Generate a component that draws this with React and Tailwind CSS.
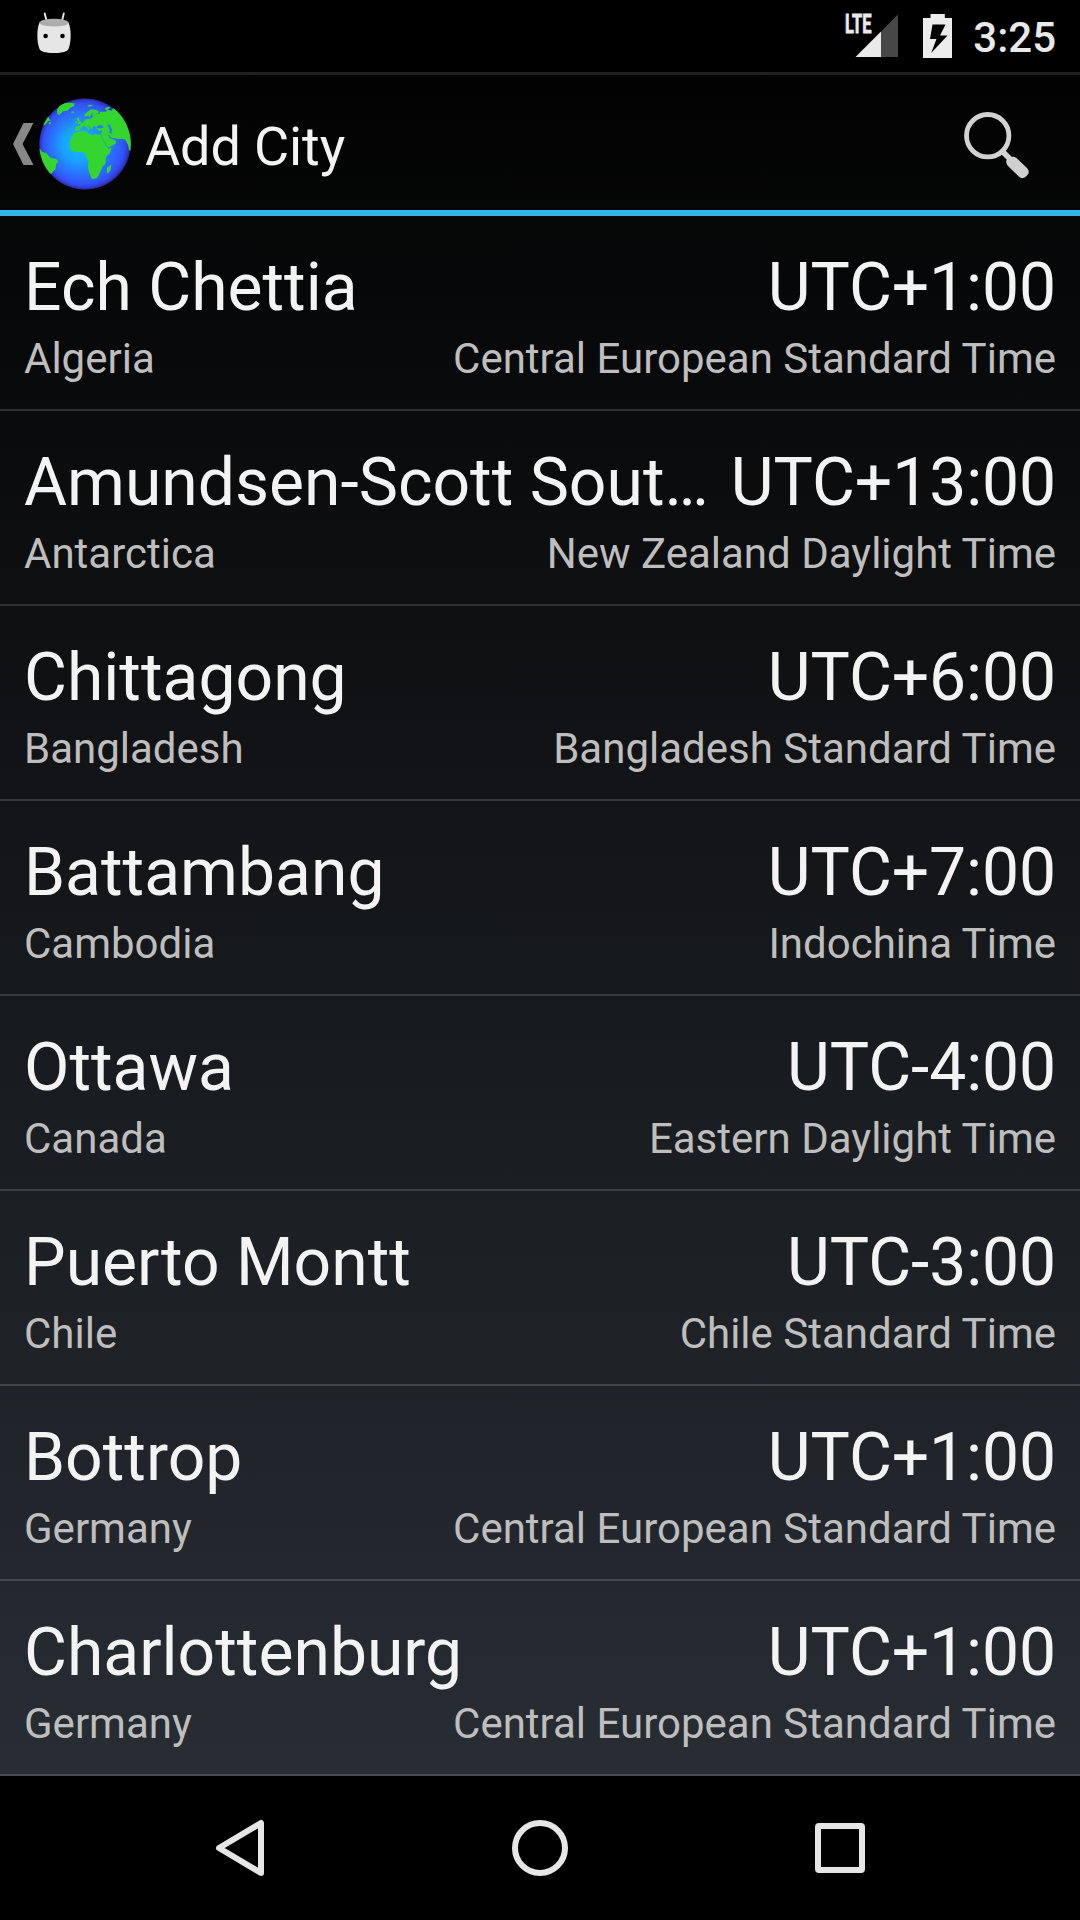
const cities = [
  ["Ech Chettia", "UTC+1:00", "Algeria", "Central European Standard Time"],
  ["Amundsen-Scott Sout…", "UTC+13:00", "Antarctica", "New Zealand Daylight Time"],
  ["Chittagong", "UTC+6:00", "Bangladesh", "Bangladesh Standard Time"],
  ["Battambang", "UTC+7:00", "Cambodia", "Indochina Time"],
  ["Ottawa", "UTC-4:00", "Canada", "Eastern Daylight Time"],
  ["Puerto Montt", "UTC-3:00", "Chile", "Chile Standard Time"],
  ["Bottrop", "UTC+1:00", "Germany", "Central European Standard Time"],
  ["Charlottenburg", "UTC+1:00", "Germany", "Central European Standard Time"],
];

function MarshmallowIcon() {
  return (
    <svg width="36" height="42" viewBox="0 0 36 42" className="block">
      <path d="M8.7 1.5 L10.7 9 M27.8 1.5 L26 9" stroke="#e6e6e6" strokeWidth="1.9" strokeLinecap="round" />
      <path d="M3.5 10.5 C0.6 17 0.6 30 3.5 37 C4.5 39.4 9 41 18 41 C27 41 31.5 39.4 32.5 37 C35.400 30 35.400 17 32.5 10.5 Z" fill="#e6e6e6" />
      <ellipse cx="18" cy="10.7" rx="14.6" ry="3.9" fill="#adadad" />
      <circle cx="9.6" cy="24" r="2.3" fill="#000" />
      <circle cx="26.5" cy="24" r="2.3" fill="#000" />
    </svg>
  );
}

function SignalIcon() {
  return (
    <svg width="56" height="58" viewBox="-2 -12 56 58" className="block">
      <path d="M53 1.5 V44 H36 V18.5 Z" fill="#474747" />
      <path d="M36 18.5 V44 H10.5 Z" fill="#e9e9e9" />
      <text x="0" y="20.2" fontFamily="Roboto, sans-serif" fontWeight="700" fontSize="25" textLength="26.500" lengthAdjust="spacingAndGlyphs" fill="#e9e9e9" stroke="#e9e9e9" strokeWidth="0.8">LTE</text>
    </svg>
  );
}

function BatteryIcon() {
  return (
    <svg width="29" height="44" viewBox="0 0 29 44" className="block">
      <path fillRule="evenodd" d="M7.5 0 H21.8 V4 H29 V44 H0 V4 H7.5 Z M9.5 10.5 L7 25 H13.5 L8.2 39 L24.5 21.5 H17 L22.5 10.5 Z" fill="#ececec" />
    </svg>
  );
}

function Globe() {
  return (
    <svg width="92" height="92" viewBox="117 294 276 276" className="block">
      <defs>
        <radialGradient id="sea" gradientUnits="userSpaceOnUse" cx="255" cy="432" r="138" fx="225" fy="436">
          <stop offset="0" stopColor="#10b8ff" />
          <stop offset="0.34" stopColor="#17a4ff" />
          <stop offset="0.68" stopColor="#2a70ff" />
          <stop offset="0.88" stopColor="#3152fa" />
          <stop offset="0.96" stopColor="#3038c4" />
          <stop offset="1" stopColor="#1c1b70" />
        </radialGradient>
        <clipPath id="disc"><circle cx="255" cy="432" r="137.500" /></clipPath>
      </defs>
      <g clipPath="url(#disc)">
        <circle cx="255" cy="432" r="138" fill="url(#sea)" />
        <g fill="#33d52e">
          <path d="M172 342 L171 329 L177 321 L182 311 L203 308 L224 310 L222 319 L210 324 L203 332 L190 334 L178 345 Z" />
          <path d="M213 337 L219 334 L224 337 L218 340 Z" />
          <path d="M261 317 L270 314 L278 315 L274 319 L266 320 Z" />
          <path d="M314 326 L322 320 L331 321 L329 325 L320 331 Z" />
          <path d="M128 365 L143 346 L148 356 L152 363 L146 362 L140 369 L136 374 L126 377 Z M146 368 L153 366 L152 373 L146 373 Z" />
          <path d="M114 445 L121 448 L127 456 L139 459 L147 469 L153 474 L169 477 L175 485 L168 493 L167 508 L160 514 L154 522 L140 515 L116 470 Z" />
          <path d="M229 356 L236 350 L237 358 L243 366 L243 371 L231 373 L235 366 Z M227 364 L232 362 L230 369 L225 369 Z" />
          <path d="M226 391 L226 379 L240 378 L241 371 L250 366 L257 358 L267 357 L276 354 L279 349 L276 345 L281 337 L274 343 L270 351 L263 347 L253 350 L254 342 L263 335 L274 328 L289 329 L298 335 L291 342 L298 342 L300 335 L318 335 L323 329 L333 332 L341 324 L370 338 L405 390 L398 455 L387 450 L384 435 L376 419 L366 416 L357 418 L345 415 L334 413 L326 405 L322 402 L329 414 L337 418 L347 421 L348 430 L339 436 L324 443 L315 428 L306 412 L303 402 L307 392 L296 393 L290 387 L289 380 L280 379 L276 389 L269 380 L261 374 L271 386 L267 391 L257 380 L251 378 L243 383 L239 391 L231 394 Z" />
          <path d="M222 399 L247 393 L261 394 L265 402 L280 406 L285 401 L302 405 L312 427 L323 445 L335 444 L330 458 L318 472 L316 491 L307 501 L301 515 L292 534 L277 538 L269 523 L264 503 L265 483 L257 468 L255 459 L244 456 L226 457 L216 453 L209 441 L210 423 L216 410 Z" />
          <path d="M329 497 L334 493 L332 509 L326 519 L320 518 L321 503 Z" />
        </g>
        <g fill="#247ff4">
          <path d="M290 381 L295 376 L305 376 L312 382 L304 385 L291 385 Z" />
          <path d="M322 375 L330 373 L333 383 L337 390 L334 402 L328 398 L329 390 Z" />
        </g>
      </g>
    </svg>
  );
}

function SearchIcon() {
  return (
    <svg width="68" height="68" viewBox="0 0 68 68" className="block">
      <circle cx="24.7" cy="24.7" r="21.2" fill="none" stroke="#d2d2d2" strokeWidth="4.8" />
      <path d="M39 40 L47 48" stroke="#d2d2d2" strokeWidth="5.5" />
      <path d="M43.5 49 L45.5 47 Q50 44.5 53.5 47 L64 57 Q67.5 61 64 64.5 Q60 69 56 65.8 L45 55 Q42.5 52 43.5 49 Z" fill="#d0d0d0" />
    </svg>
  );
}

export default function App() {
  return (
    <div className="flex h-[1920px] w-[1080px] flex-col overflow-hidden bg-black font-['Roboto',sans-serif] text-[#f3f3f3]">
      <header className="flex h-[72px] shrink-0 items-start bg-black pl-[36px] pr-[24px]">
        <div className="pt-[12px]"><MarshmallowIcon /></div>
        <div className="ml-auto flex items-start">
          <div className="pt-px"><SignalIcon /></div>
          <div className="ml-[24px] pt-[14px]"><BatteryIcon /></div>
          <span className="ml-[21px] pt-[13px] text-[42px] font-medium leading-[49px] text-[#e9e9e9]">3:25</span>
        </div>
      </header>
      <div className="flex min-h-0 flex-1 flex-col bg-[linear-gradient(to_bottom,#020202,#282d34)]">
        <div className="flex h-[144px] shrink-0 items-start border-b-[6px] border-t-[3px] border-b-[#33b5e5] border-t-[#1f1f1f] pl-[13px] pr-[49px]">
          <svg width="21" height="42" viewBox="0 0 21 42" className="mt-[48px]">
            <path d="M10.5 0 H20.5 L9.5 21 L20.5 42 H10.5 L0 21 Z" fill="#888" />
          </svg>
          <div className="ml-[5px] mt-[23px]"><Globe /></div>
          <h1 className="ml-[14px] mt-[40px] text-[54px] font-normal leading-[63px] tracking-[-0.12px]">Add City</h1>
          <div className="ml-auto mt-[36px]"><SearchIcon /></div>
        </div>
        <ul>
          {cities.map(([city, offset, country, zone]) => (
            <li key={city} className="h-[195px] border-b-2 border-white/15 px-[24px] pt-[33px]">
              <div className="flex justify-between whitespace-nowrap text-[66px] leading-[77px]">
                <span>{city}</span>
                <span className="tracking-[-0.1px]">{offset}</span>
              </div>
              <div className="mt-[8px] flex justify-between text-[42px] leading-[49px] text-[#bebebe]">
                <span>{country}</span>
                <span>{zone}</span>
              </div>
            </li>
          ))}
        </ul>
      </div>
      <nav className="flex h-[144px] shrink-0 items-center bg-black pl-[215px]">
        <svg width="50" height="58" viewBox="0 0 50 58">
          <path d="M46 4 V54 L4 29 Z" fill="none" stroke="#e6e6e6" strokeWidth="6" strokeLinejoin="round" />
        </svg>
        <svg width="56" height="56" viewBox="0 0 56 56" className="ml-[247px]">
          <circle cx="28" cy="28" r="25" fill="none" stroke="#e6e6e6" strokeWidth="6" />
        </svg>
        <div className="ml-[247px] h-[50px] w-[50px] rounded-[4px] border-[6px] border-[#e6e6e6]" />
      </nav>
    </div>
  );
}
